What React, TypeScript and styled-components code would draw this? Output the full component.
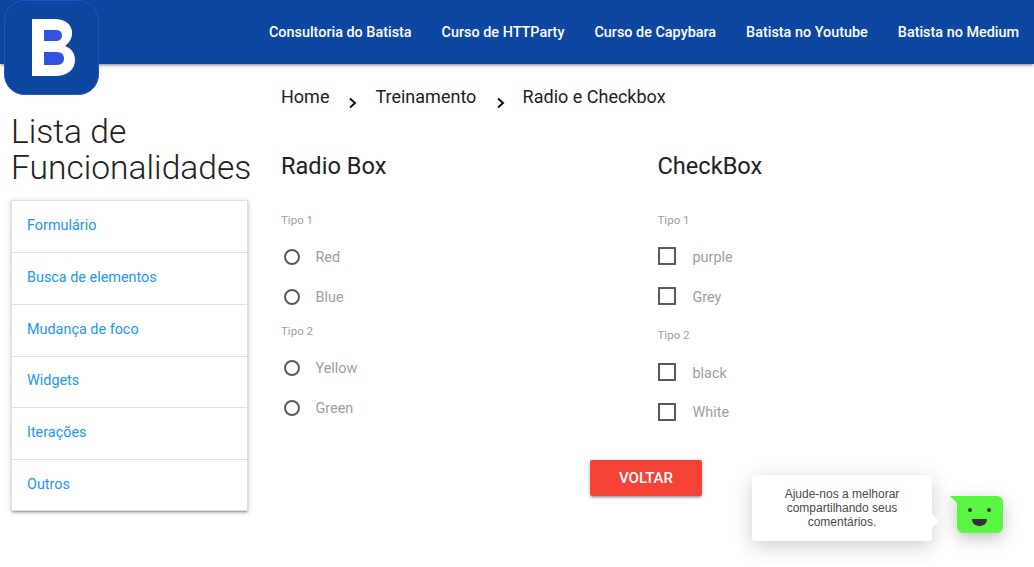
import React from "react";
import styled, { createGlobalStyle } from "styled-components";

const Global = createGlobalStyle`
  html, body { margin: 0; padding: 0; background: #fff; }
  body { font-family: Roboto, "Liberation Sans", sans-serif; overflow: hidden; }
  * { box-sizing: border-box; }
`;
const Page = styled.div`
  position: relative;
  width: 1034px;
  height: 567px;
  overflow: hidden;
`;
const Header = styled.header`
  height: 64px;
  background: #0d47a1;
  box-shadow: 0 2px 2px 0 rgba(0,0,0,.14), 0 3px 1px -2px rgba(0,0,0,.12), 0 1px 5px 0 rgba(0,0,0,.2);
  display: flex;
  justify-content: flex-end;
  align-items: center;
`;
const NavList = styled.nav`
  display: flex;
  align-items: center;
  height: 100%;
  padding-top: 1px;
`;
const NavLink = styled.a`
  padding: 0 15px;
  color: #fff;
  font-size: 14.4px;
  font-weight: 500;
  line-height: 63px;
  text-decoration: none;
  white-space: nowrap;
`;
const LogoMark = styled.svg`
  position: absolute;
  left: 4px;
  top: 0;
  width: 95px;
  height: 95px;
`;
const Body = styled.div`
  display: flex;
`;
const Sidebar = styled.aside`
  width: 281px;
  flex: none;
  padding: 50px 0 0 11px;
`;
const SideTitle = styled.h1`
  margin: 0;
  font-size: 33.6px;
  line-height: 36px;
  font-weight: 300;
  color: #212121;
`;
const SideList = styled.ul`
  list-style: none;
  margin: 14px 0 0;
  padding: 0;
  width: 237px;
  background: #fff;
  border: 1px solid #e0e0e0;
  box-shadow: 0 2px 2px 0 rgba(0,0,0,.14), 0 3px 1px -2px rgba(0,0,0,.12), 0 1px 5px 0 rgba(0,0,0,.2);
`;
const SideItem = styled.li`
  height: 51.85px;
  padding: 0 0 2px 15px;
  display: flex;
  align-items: center;
  color: #2196f3;
  font-size: 14.4px;
  border-bottom: 1px solid #e0e0e0;
  &:last-child { border-bottom: 0; height: 50px; }
`;
const Content = styled.main`
  flex: 1;
  min-width: 0;
`;
const Crumbs = styled.div`
  display: flex;
  align-items: flex-start;
  height: 87px;
  padding-top: 21px;
  font-size: 18px;
  line-height: 24px;
  color: #212121;
`;
const Chevron = styled.svg<{ $shift?: number }>`
  width: 10px;
  height: 12px;
  margin: 12px ${(p) => 17 - (p.$shift ?? 0) + 0.25 * (p.$shift ?? 0)}px 0 ${(p) => 19 + (p.$shift ?? 0)}px;
  flex: none;
`;
const Columns = styled.div`
  display: grid;
  grid-template-columns: 376.5px 1fr;
`;
const Column = styled.section``;
const GroupTitle = styled.h2`
  margin: 0 0 31px;
  font-size: 23.6px;
  font-weight: 400;
  line-height: 30px;
  height: 30px;
  color: #212121;
`;
const GroupLabel = styled.div<{ $top?: number; $bottom?: number }>`
  font-size: 11.52px;
  line-height: 16px;
  height: 16px;
  color: #9e9e9e;
  margin-top: ${(p) => p.$top ?? 0}px;
  margin-bottom: ${(p) => p.$bottom ?? 9}px;
`;
const OptionRow = styled.label<{ $h: number }>`
  display: flex;
  align-items: center;
  height: ${(p) => p.$h}px;
  font-size: 14.4px;
  color: #9e9e9e;
`;
const RadioMark = styled.span`
  width: 16px;
  height: 16px;
  margin: 0 15.5px 0 3px;
  border: 2px solid #5a5a5a;
  border-radius: 50%;
  flex: none;
`;
const CheckMark = styled.span`
  width: 18px;
  height: 18px;
  margin: 0 17px 0 0;
  border: 2px solid #5a5a5a;
  flex: none;
  position: relative;
  top: -1px;
`;
const ButtonRow = styled.div`
  display: flex;
  padding-left: 309px;
  margin-top: 27.5px;
`;
const BackButton = styled.button`
  width: 112px;
  height: 36px;
  border: 0;
  border-radius: 2px;
  background: #f44336;
  color: #fff;
  font-family: inherit;
  font-size: 15px;
  font-weight: 500;
  box-shadow: 0 2px 2px 0 rgba(0,0,0,.14), 0 3px 1px -2px rgba(0,0,0,.12), 0 1px 5px 0 rgba(0,0,0,.2);
`;
const Tooltip = styled.div`
  position: absolute;
  left: 752px;
  top: 475px;
  width: 180px;
  height: 66px;
  padding: 12px 20px 0;
  background: #fff;
  border-radius: 3px;
  box-shadow: 0 5px 20px rgba(0,0,0,.2);
  font-family: "Liberation Sans", Arial, sans-serif;
  font-size: 12px;
  line-height: 14px;
  color: #4a4a4a;
  text-align: center;
  &::after {
    content: "";
    position: absolute;
    right: -7px;
    top: 39px;
    border-style: solid;
    border-width: 7px 0 7px 7px;
    border-color: transparent transparent transparent #fff;
  }
`;
const Bot = styled.svg`
  position: absolute;
  left: 950px;
  top: 496px;
  width: 53px;
  height: 38px;
  overflow: visible;
  filter: drop-shadow(0 5px 8px rgba(0,0,0,.25));
`;

export default function App() {
  return (
    <Page>
      <Global />
      <Header>
        <NavList>
          <NavLink>Consultoria do Batista</NavLink>
          <NavLink>Curso de HTTParty</NavLink>
          <NavLink>Curso de Capybara</NavLink>
          <NavLink>Batista no Youtube</NavLink>
          <NavLink>Batista no Medium</NavLink>
        </NavList>
      </Header>
      <LogoMark viewBox="0 0 95 95">
        <rect x="0.5" y="0.5" width="94" height="94" rx="20" fill="#0d47a1" stroke="#2a4fc4" strokeWidth="1" />
        <path d="M28 19H50C62 19 68 25 68 33C68 39 65 43 61 46C67 48 71 53 71 60C71 70 63 76 51 76H28Z" fill="#fff" />
        <path d="M40 30H51C56 30 58 32 58 35.500C58 39 56 41 51 41H40ZM40 52H53C58 52 60 55 60 58.500C60 62 58 65 53 65H40Z" fill="#3452e1" />
      </LogoMark>
      <Body>
        <Sidebar>
          <SideTitle>Lista de Funcionalidades</SideTitle>
          <SideList>
            <SideItem>Formulário</SideItem>
            <SideItem>Busca de elementos</SideItem>
            <SideItem>Mudança de foco</SideItem>
            <SideItem>Widgets</SideItem>
            <SideItem>Iterações</SideItem>
            <SideItem>Outros</SideItem>
          </SideList>
        </Sidebar>
        <Content>
          <Crumbs>
            <span>Home</span>
            <Chevron viewBox="0 0 10 12"><path d="M2 1.500 7 6 2 10.500" fill="none" stroke="#111" strokeWidth="2" /></Chevron>
            <span>Treinamento</span>
            <Chevron viewBox="0 0 10 12" $shift={1}><path d="M2 1.500 7 6 2 10.500" fill="none" stroke="#111" strokeWidth="2" /></Chevron>
            <span>Radio e Checkbox</span>
          </Crumbs>
          <Columns>
            <Column>
              <GroupTitle>Radio Box</GroupTitle>
              <GroupLabel>Tipo 1</GroupLabel>
              <OptionRow $h={40}><RadioMark />Red</OptionRow>
              <OptionRow $h={40}><RadioMark />Blue</OptionRow>
              <GroupLabel $top={6}>Tipo 2</GroupLabel>
              <OptionRow $h={40}><RadioMark />Yellow</OptionRow>
              <OptionRow $h={40}><RadioMark />Green</OptionRow>
            </Column>
            <Column>
              <GroupTitle>CheckBox</GroupTitle>
              <GroupLabel>Tipo 1</GroupLabel>
              <OptionRow $h={40}><CheckMark />purple</OptionRow>
              <OptionRow $h={40}><CheckMark />Grey</OptionRow>
              <GroupLabel $top={10} $bottom={10.5}>Tipo 2</GroupLabel>
              <OptionRow $h={39.5}><CheckMark />black</OptionRow>
              <OptionRow $h={39.5}><CheckMark />White</OptionRow>
            </Column>
          </Columns>
          <ButtonRow><BackButton>VOLTAR</BackButton></ButtonRow>
        </Content>
      </Body>
      <Tooltip>Ajude-nos a melhorar compartilhando seus comentários.</Tooltip>
      <Bot viewBox="0 0 53 38">
        <path d="M0 0H47a6 6 0 0 1 6 6V31a6 6 0 0 1-6 6H13a6 6 0 0 1-6-6V7Z" fill="#5af542" />
        <circle cx="20" cy="14" r="2" fill="#333" />
        <circle cx="39" cy="14" r="2" fill="#333" />
        <path d="M22 23H37C37 28 33 30 29.500 30S22 28 22 23Z" fill="#333" />
      </Bot>
    </Page>
  );
}
